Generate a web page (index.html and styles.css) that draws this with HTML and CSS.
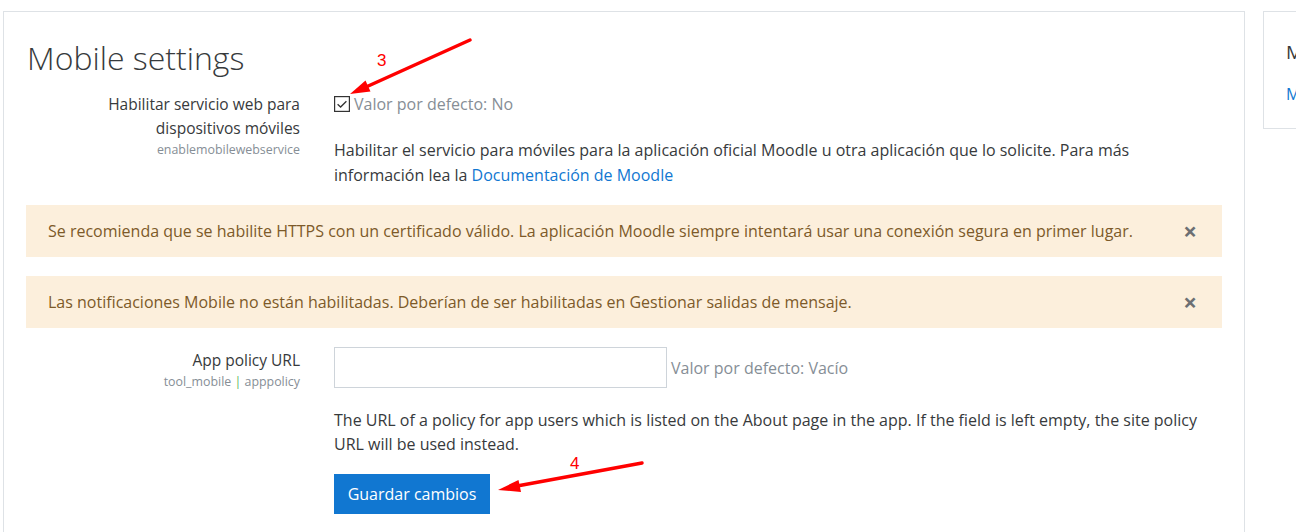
FILE: index.html
```html
<!DOCTYPE html>
<html lang="es">
<head>
<meta charset="utf-8">
<title>Mobile settings</title>
<link rel="stylesheet" href="styles.css">
</head>
<body>
<div class="page">
  <main class="card main">
    <h2 class="title">Mobile settings</h2>

    <div class="setting setting-check">
      <div class="label">
        <div class="name">Habilitar servicio web para dispositivos móviles</div>
        <div class="key">enablemobilewebservice</div>
      </div>
      <div class="field">
        <div class="control-row">
          <span class="checkbox"><svg viewBox="0 0 16 16" width="16" height="16"><rect x="0.6" y="0.6" width="14.8" height="14.8" fill="#fff" stroke="#333" stroke-width="1.2"/><path d="M3.6 8.3 L6.6 11 L12.4 5.2" fill="none" stroke="#333" stroke-width="1.3"/></svg></span>
          <span class="default">Valor por defecto: No</span>
        </div>
        <p class="desc">Habilitar el servicio para móviles para la aplicación oficial Moodle u otra aplicación que lo solicite. Para más información lea la <a href="#">Documentación de Moodle</a></p>
      </div>
    </div>

    <div class="alert">
      <span>Se recomienda que se habilite HTTPS con un certificado válido. La aplicación Moodle siempre intentará usar una conexión segura en primer lugar.</span>
      <span class="close">×</span>
    </div>
    <div class="alert">
      <span>Las notificaciones Mobile no están habilitadas. Deberían de ser habilitadas en Gestionar salidas de mensaje.</span>
      <span class="close">×</span>
    </div>

    <div class="setting setting-url">
      <div class="label">
        <div class="name">App policy URL</div>
        <div class="key">tool_mobile <span class="sep">|</span> apppolicy</div>
      </div>
      <div class="field">
        <div class="control-row">
          <input class="text-input" type="text">
          <span class="default">Valor por defecto: Vacío</span>
        </div>
        <p class="desc">The URL of a policy for app users which is listed on the About page in the app. If the field is left empty, the site policy URL will be used instead.</p>
        <button class="btn">Guardar cambios</button>
      </div>
    </div>
  </main>
  <aside class="card side">
    <div class="side-title">M</div>
    <a class="side-link" href="#">M</a>
  </aside>
</div>

<svg class="annot" width="1296" height="532" viewBox="0 0 1296 532">
  <text x="377" y="66" class="num">3</text>
  <line x1="470" y1="40" x2="366" y2="87" stroke="#f00" stroke-width="3.5" stroke-linecap="round"/>
  <polygon points="350,94 365.5,80.5 370.5,91.5" fill="#f00"/>
  <text x="570" y="469" class="num">4</text>
  <line x1="642" y1="463" x2="517" y2="486" stroke="#f00" stroke-width="3.5" stroke-linecap="round"/>
  <polygon points="498,490 518.5,480 521,492" fill="#f00"/>
</svg>
</body>
</html>
```
FILE: styles.css
```css
html, body {
  margin: 0;
  padding: 0;
  background: #fff;
}
body {
  font-family: "Open Sans", "Noto Sans", sans-serif;
  color: #373a3c;
  font-size: 16px;
  width: 1296px;
  height: 532px;
  overflow: hidden;
  position: relative;
}
.page {
  display: flex;
  gap: 18px;
  padding: 11px 0 0 3px;
  align-items: flex-start;
  height: 532px;
  box-sizing: border-box;
  overflow: hidden;
}
.card {
  border: 1px solid #dee2e6;
  background: #fff;
  box-sizing: border-box;
}
.main {
  width: 1242px;
  padding: 24px 22px 40px 22px;
  flex: none;
}
.side {
  width: 100px;
  height: 118px;
  flex: none;
  padding: 28px 0 0 22px;
}
.side-title {
  font-size: 19px;
  color: #373a3c;
  line-height: 24px;
}
.side-link {
  display: block;
  margin-top: 19px;
  color: #1177d1;
  text-decoration: none;
  font-size: 16px;
}
.title {
  font-weight: 300;
  font-size: 32px;
  line-height: 44px;
  margin: 0 0 12px 1px;
  color: #373a3c;
}
.setting {
  display: grid;
  grid-template-columns: 274px 1fr;
  column-gap: 34px;
}
.label {
  text-align: right;
}
.name {
  font-size: 15.5px;
  line-height: 24px;
}
.key {
  font-size: 12.4px;
  color: #868e96;
  line-height: 20px;
}
.sep {
  color: #5cb85c;
}
.control-row {
  display: flex;
  align-items: center;
  gap: 4px;
}
.checkbox {
  display: inline-flex;
  width: 16px;
  height: 16px;
}
.default {
  color: #868e96;
  font-size: 16px;
}
.desc {
  margin: 22px 0 0 0;
  line-height: 24.5px;
  font-size: 16px;
}
.desc a {
  color: #1177d1;
  text-decoration: none;
}
.setting-check .control-row {
  height: 24px;
}
.alert {
  display: flex;
  justify-content: space-between;
  align-items: center;
  background: #fcefdc;
  color: #7d5a29;
  height: 52px;
  box-sizing: border-box;
  padding: 0 22px;
  margin-top: 18px;
  font-size: 16px;
}
.alert + .alert {
  margin-top: 19px;
}
.close {
  font-size: 24px;
  color: #6c6f73;
  font-weight: 700;
  margin-right: 3px;
  line-height: 1;
}
.setting-url {
  margin-top: 19px;
}
.setting-url .label {
  padding-top: 1px;
}
.text-input {
  width: 333px;
  height: 41px;
  box-sizing: border-box;
  border: 1px solid #ced4da;
  margin: 0;
  padding: 0 10px;
  font: inherit;
}
.setting-url .desc {
  margin-top: 20px;
  line-height: 24px;
}
.btn {
  margin-top: 18px;
  background: #1177d1;
  color: #fff;
  border: none;
  height: 40px;
  width: 156px;
  font: inherit;
  font-size: 16px;
  padding: 0;
}
.annot {
  position: absolute;
  left: 0;
  top: 0;
  pointer-events: none;
}
.num {
  fill: #f00;
  font-family: "Liberation Sans", sans-serif;
  font-size: 17px;
}
```
